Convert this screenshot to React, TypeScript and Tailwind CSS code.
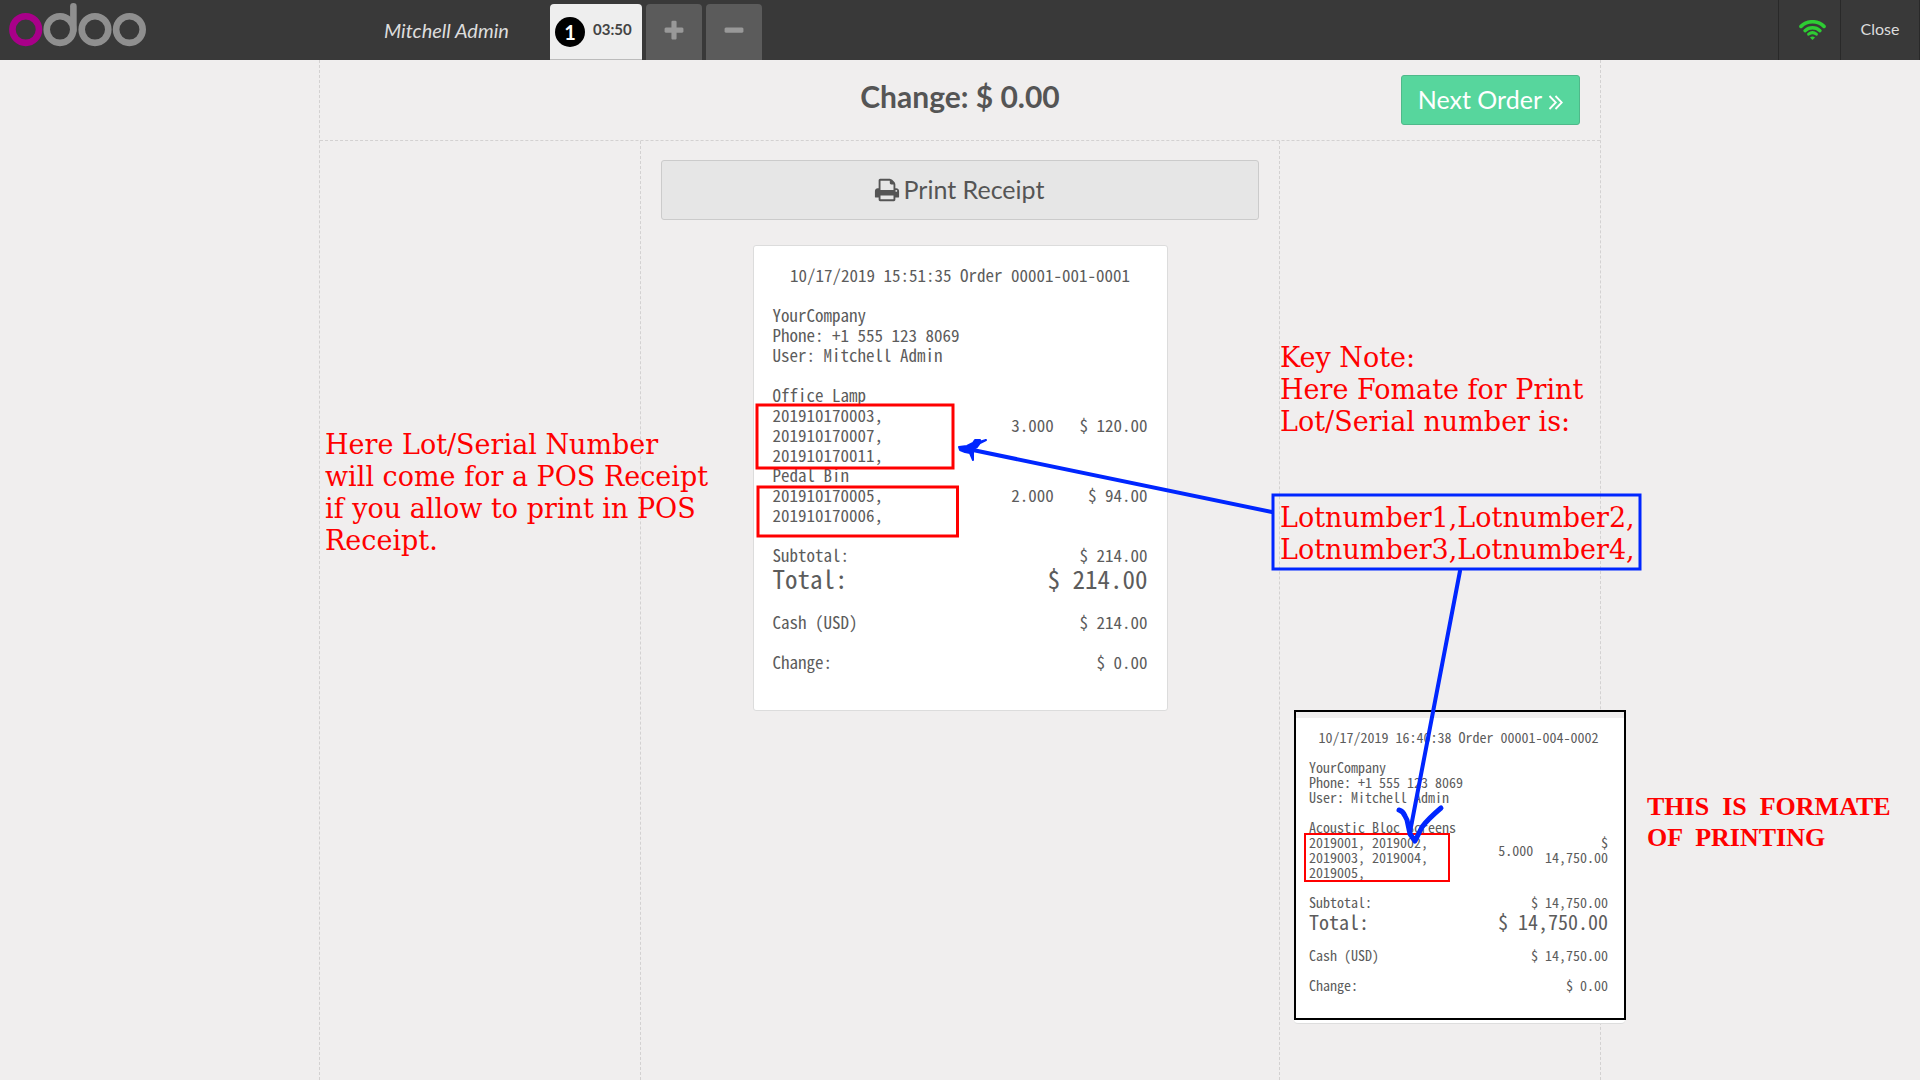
import React from "react";

type Item = { name: string; lots: string[]; qty: string; price: string[] };

type ReceiptData = {
  title: string;
  items: Item[];
  total: string;
};

const mainReceipt: ReceiptData = {
  title: "10/17/2019 15:51:35 Order 00001-001-0001",
  items: [
    {
      name: "Office Lamp",
      lots: ["201910170003,", "201910170007,", "201910170011,"],
      qty: "3.000",
      price: ["$ 120.00"],
    },
    {
      name: "Pedal Bin",
      lots: ["201910170005,", "201910170006,"],
      qty: "2.000",
      price: ["$ 94.00"],
    },
  ],
  total: "$ 214.00",
};

const sampleReceipt: ReceiptData = {
  title: "10/17/2019 16:40:38 Order 00001-004-0002",
  items: [
    {
      name: "Acoustic Bloc Screens",
      lots: ["2019001, 2019002,", "2019003, 2019004,", "2019005,"],
      qty: "5.000",
      price: ["$", "14,750.00"],
    },
  ],
  total: "$ 14,750.00",
};

const mono = "font-['Noto_Sans_Mono_CJK_SC','Liberation_Mono',monospace]";

function Receipt({ data, small = false }: { data: ReceiptData; small?: boolean }) {
  const text = small ? "text-[14px] leading-[15px]" : "text-[17px] leading-5";
  const gap = small ? "mt-[15px]" : "mt-5";
  const big = small ? "text-[20px] leading-[23px]" : "text-[25px] leading-[27px]";
  const row = "flex justify-between";
  return (
    <div className={`${mono} ${text} whitespace-nowrap text-[#5c5c5c]`}>
      <p className="flex justify-center">{data.title}</p>
      <div className={gap}>
        <p>YourCompany</p>
        <p>Phone: +1 555 123 8069</p>
        <p>User: Mitchell Admin</p>
      </div>
      <table className={`${gap} w-full table-fixed border-collapse`}>
        <colgroup>
          <col className="w-1/2" />
          <col className="w-1/4" />
          <col className="w-1/4" />
        </colgroup>
        <tbody>
          {data.items.map((item) => (
            <tr key={item.name}>
              <td className="p-0 align-middle">
                <p>{item.name}</p>
                {item.lots.map((lot) => (
                  <p key={lot}>{lot}</p>
                ))}
              </td>
              <td className="p-0 text-right align-middle">{item.qty}</td>
              <td className="p-0 text-right align-middle">
                {item.price.map((p) => (
                  <p key={p}>{p}</p>
                ))}
              </td>
            </tr>
          ))}
        </tbody>
      </table>
      <div className={`${gap} ${row}`}>
        <span>Subtotal:</span>
        <span>{data.total}</span>
      </div>
      <div className={`${row} ${big}`}>
        <span>Total:</span>
        <span>{data.total}</span>
      </div>
      <div className={`${gap} ${row}`}>
        <span>Cash (USD)</span>
        <span>{data.total}</span>
      </div>
      <div className={`${gap} ${row}`}>
        <span>Change:</span>
        <span>$ 0.00</span>
      </div>
    </div>
  );
}

function Glyph({ d, className }: { d: string; className: string }) {
  return (
    <svg viewBox="0 0 1792 1792" className={className} fill="currentColor" aria-hidden="true">
      <path d={d} />
    </svg>
  );
}

const printPath =
  "M448 1536h896v-256h-896v256zm0-640h896v-384h-160q-40 0-68-28t-28-68v-160h-640v640zm1152 64q0-26-19-45t-45-19-45 19-19 45 19 45 45 19 45-19 19-45zm128 0v416q0 13-9.5 22.5t-22.5 9.5h-224v160q0 40-28 68t-68 28h-960q-40 0-68-28t-28-68v-160h-224q-13 0-22.5-9.5t-9.5-22.5v-416q0-79 56.5-135.5t135.5-56.5h64v-544q0-40 28-68t68-28h672q40 0 88 20t76 48l152 152q28 28 48 76t20 88v256h64q79 0 135.5 56.5t56.5 135.5z";
const plusPath =
  "M1600 736v192q0 40-28 68t-68 28h-416v416q0 40-28 68t-68 28h-192q-40 0-68-28t-28-68v-416h-416q-40 0-68-28t-28-68v-192q0-40 28-68t68-28h416v-416q0-40 28-68t68-28h192q40 0 68 28t28 68v416h416q40 0 68 28t28 68z";
const minusPath =
  "M1600 736v192q0 40-28 68t-68 28h-1216q-40 0-68-28t-28-68v-192q0-40 28-68t68-28h1216q40 0 68 28t28 68z";

function Logo() {
  return (
    <svg width="140" height="48" viewBox="8 1 140 48" fill="none" strokeWidth="6.6" role="img" aria-label="odoo">
      <g stroke="#8f8f8f">
        <circle cx="60" cy="29.6" r="13.3" />
        <circle cx="95" cy="29.6" r="13.3" />
        <circle cx="129.4" cy="29.6" r="13.3" />
        <path d="M73.4 6.4V30" strokeLinecap="round" />
      </g>
      <circle cx="25.7" cy="29.6" r="13.3" stroke="#a90089" />
    </svg>
  );
}

function TopBar() {
  return (
    <header className="flex h-[60px] items-stretch bg-[#393939] text-[#ddd]">
      <a href="#home" className="w-[340px] shrink-0 pt-px pl-2">
        <Logo />
      </a>
      <div className="flex w-[210px] shrink-0 items-center pl-11 text-[20px] italic">Mitchell Admin</div>
      <nav className="flex gap-1 pt-1">
        <button className="flex w-[92px] items-center rounded-t-sm border-b border-[#bbb] bg-[#eee] pl-[5px] font-bold text-[#444]">
          <span className="flex size-[30px] items-center justify-center rounded-full bg-black text-[20px] text-white">
            1
          </span>
          <span className="ml-2 pb-1 text-[15px]">03:50</span>
        </button>
        <button aria-label="New order" className="flex w-14 items-center justify-center rounded-t-sm bg-[#5b5b5b] pb-0.5 text-[#999]">
          <Glyph d={plusPath} className="size-6" />
        </button>
        <button aria-label="Delete order" className="flex w-14 items-center justify-center rounded-t-sm bg-[#5b5b5b] pb-0.5 text-[#999]">
          <Glyph d={minusPath} className="size-6" />
        </button>
      </nav>
      <div className="ml-auto flex border-r border-[#292929]">
        <button aria-label="Synchronised" className="flex w-[62px] items-center justify-center border-l border-[#292929] pl-1.5">
          <svg width="27" height="20" viewBox="0 0 27 20" fill="none" stroke="#2ecc33" strokeWidth="3.6" strokeLinecap="round">
            <path d="M2 6.4A16.5 16.5 0 0 1 25 6.4" />
            <path d="M6 10.7A11 11 0 0 1 21 10.7" strokeWidth="3.4" />
            <path d="M9.6 14.2A6.2 6.2 0 0 1 17.4 14.2" strokeWidth="3" />
            <path d="M11 17.6Q13.5 15.6 16 17.6L13.5 20Z" fill="#2ecc33" stroke="none" />
          </svg>
        </button>
        <button className="w-[79px] border-l border-[#292929] pb-0.5 text-[16px]">Close</button>
      </div>
    </header>
  );
}

function Annotations() {
  return (
    <div className="absolute top-0 left-0">
      <p className="absolute top-[369px] left-[5px] font-['DejaVu_Serif',serif] text-[27px] leading-8 whitespace-pre text-[#ff0000]">
        {"Here Lot/Serial Number\nwill come for a POS Receipt\nif you allow to print in POS\nReceipt."}
      </p>
      <p className="absolute top-[282px] left-[960px] font-['DejaVu_Serif',serif] text-[27px] leading-8 whitespace-pre text-[#ff0000]">
        {"Key Note:\nHere Fomate for Print\nLot/Serial number is:\n\n\nLotnumber1,Lotnumber2,\nLotnumber3,Lotnumber4,"}
      </p>
      <p className="absolute top-[731px] left-[1327px] font-['Liberation_Serif',serif] text-[26px] leading-[31px] font-bold whitespace-pre text-[#ff0000]">
        {"THIS  IS  FORMATE\nOF  PRINTING"}
      </p>
      <div className="absolute top-[650px] left-[974px] w-[332px]">
        <div className="border-2 border-black bg-white">
          <div className="h-1.5 bg-[#f0eeee]" />
          <div className="pt-3 pr-4 pb-[25px] pl-[13px]">
            <Receipt data={sampleReceipt} small />
          </div>
        </div>
        <div className="mr-px h-1 rounded-b-sm border-b border-[#ddd] bg-white" />
      </div>
      <svg
        className="pointer-events-none absolute top-0 left-0 max-w-none overflow-visible"
        width="1280"
        height="1020"
        viewBox="320 60 1280 1020"
        fill="none"
        aria-hidden="true"
      >
        <g stroke="#ff0000" strokeWidth="3">
          <rect x="757" y="405" width="196" height="63" />
          <rect x="758" y="487" width="199.5" height="49" />
          <rect x="1305" y="834" width="144" height="47" strokeWidth="2" />
        </g>
        <g stroke="#0026ff" strokeWidth="4" strokeLinecap="round" strokeLinejoin="round">
          <rect x="1273" y="495" width="367" height="74" strokeWidth="3" strokeLinejoin="miter" />
          <path d="M1272 512L968 449" />
          <path d="M1460 571L1410 832" />
          <path d="M1399 810Q1403 811 1405 816L1407 820L1410 834L1415 841L1422 827Q1428 819 1441 808" strokeWidth="5" />
          <path
            d="M959 447L967 446L973 443L975 440H980L979 442L986 440L980 443L977 447L973 449V460L970 453L965 452L960 450Z"
            fill="#0026ff"
            strokeWidth="2"
          />
        </g>
      </svg>
    </div>
  );
}

export default function App() {
  return (
    <div className="flex min-h-screen flex-col overflow-x-hidden bg-[#f0eeee] font-['Lato',sans-serif] text-[#555]">
      <TopBar />
      <main className="relative mx-auto flex w-full max-w-[1282px] flex-1 flex-col border-x border-dashed border-[#d3d1d1]">
        <div className="grid h-[81px] shrink-0 grid-cols-[1fr_auto_1fr] items-start border-b border-dashed border-[#d3d1d1] px-5">
          <h1 className="col-start-2 pt-[18px] text-[30px] leading-9 font-bold">Change: $ 0.00</h1>
          <button className="mt-[15px] flex h-[50px] items-center justify-self-end rounded-[3px] border border-[#4fb98a] bg-[#57d69d] px-4 text-[25px] text-white">
            Next Order
            <svg
              className="mt-1 ml-1.5"
              width="15"
              height="15"
              viewBox="0 0 15 15"
              fill="none"
              stroke="currentColor"
              strokeWidth="1.8"
              aria-hidden="true"
            >
              <path d="M1.5 1L7.8 7.5L1.5 14M7.5 1L13.8 7.5L7.5 14" />
            </svg>
          </button>
        </div>
        <div className="grid flex-1 grid-cols-[1fr_2fr_1fr]">
          <div />
          <section className="border-x border-dashed border-[#d3d1d1] px-5 pt-[19px]">
            <button className="flex h-[60px] w-full items-center justify-center gap-1 rounded-[3px] border border-[#cbcbcb] bg-[#e6e6e6] pr-0.5 text-[25px]">
              <Glyph d={printPath} className="size-[26px]" />
              Print Receipt
            </button>
            <div className="mx-auto mt-[25px] w-[415px] rounded-[3px] border border-[#dcdcdc] bg-white px-[19px] pt-[19px] pb-[38px]">
              <Receipt data={mainReceipt} />
            </div>
          </section>
          <div />
        </div>
        <Annotations />
      </main>
    </div>
  );
}
